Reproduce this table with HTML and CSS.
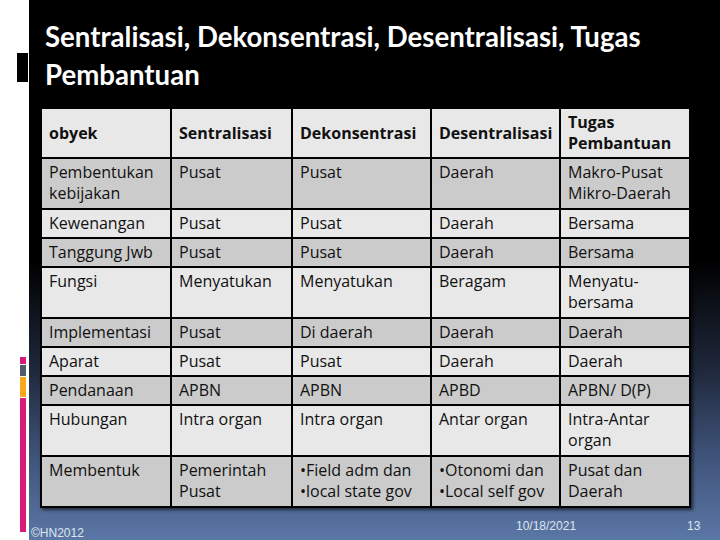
FILE: index.html
```html
<!DOCTYPE html>
<html>
<head>
<meta charset="utf-8">
<link rel="stylesheet" href="styles.css">
</head>
<body>
<div class="page">
  <div class="rail">
    <div class="mark"></div>
    <div class="bars">
      <div class="bar pink-s"></div>
      <div class="bar grey"></div>
      <div class="bar orange"></div>
      <div class="bar pink-l"></div>
    </div>
  </div>
  <div class="slide">
    <h1 class="title">Sentralisasi, Dekonsentrasi, Desentralisasi, Tugas Pembantuan</h1>
    <table class="grid">
      <colgroup>
        <col class="c1"><col class="c2"><col class="c3"><col class="c4"><col class="c5">
      </colgroup>
      <thead>
        <tr class="light head">
          <th>obyek</th><th>Sentralisasi</th><th>Dekonsentrasi</th><th>Desentralisasi</th><th>Tugas Pembantuan</th>
        </tr>
      </thead>
      <tbody>
        <tr class="dark tall"><td>Pembentukan kebijakan</td><td>Pusat</td><td>Pusat</td><td>Daerah</td><td>Makro-Pusat<br>Mikro-Daerah</td></tr>
        <tr class="light"><td>Kewenangan</td><td>Pusat</td><td>Pusat</td><td>Daerah</td><td>Bersama</td></tr>
        <tr class="dark"><td>Tanggung Jwb</td><td>Pusat</td><td>Pusat</td><td>Daerah</td><td>Bersama</td></tr>
        <tr class="light tall"><td>Fungsi</td><td>Menyatukan</td><td>Menyatukan</td><td>Beragam</td><td>Menyatu-<br>bersama</td></tr>
        <tr class="dark"><td>Implementasi</td><td>Pusat</td><td>Di daerah</td><td>Daerah</td><td>Daerah</td></tr>
        <tr class="light"><td>Aparat</td><td>Pusat</td><td>Pusat</td><td>Daerah</td><td>Daerah</td></tr>
        <tr class="dark"><td>Pendanaan</td><td>APBN</td><td>APBN</td><td>APBD</td><td>APBN/ D(P)</td></tr>
        <tr class="light tall"><td>Hubungan</td><td>Intra organ</td><td>Intra organ</td><td>Antar organ</td><td>Intra-Antar organ</td></tr>
        <tr class="dark tall"><td>Membentuk</td><td>Pemerintah Pusat</td><td>•Field adm dan<br>•local state gov</td><td>•Otonomi dan<br>•Local self gov</td><td>Pusat dan<br>Daerah</td></tr>
      </tbody>
    </table>
    <div class="footer">
      <span class="copy">©HN2012</span>
      <span class="date">10/18/2021</span>
      <span class="num">13</span>
    </div>
  </div>
</div>
</body>
</html>
```
FILE: styles.css
```css
html, body {
  margin: 0;
  padding: 0;
  background: #ffffff;
}
.page {
  display: flex;
  width: 720px;
  height: 540px;
  overflow: hidden;
}
.rail {
  width: 29px;
  flex: none;
  background: #ffffff;
  display: flex;
  flex-direction: column;
  align-items: flex-end;
}
.mark {
  width: 11px;
  height: 29px;
  background: #000;
  margin-top: 53px;
  margin-right: 1px;
}
.bars {
  margin-top: 275px;
  margin-right: 3px;
  width: 6px;
  display: flex;
  flex-direction: column;
}
.bar { width: 6px; }
.pink-s { height: 7px; background: #d81b7a; margin-bottom: 1px; }
.grey { height: 11px; background: #4f5a6a; margin-bottom: 1px; }
.orange { height: 20px; background: #f7a81b; margin-bottom: 1px; }
.pink-l { height: 134px; background: #d81b7a; }
.slide {
  flex: 1;
  height: 540px;
  background: linear-gradient(to bottom, #000 0%, #000 48%, #1e273a 68%, #3e5278 84%, #5b77a6 100%);
  display: flex;
  flex-direction: column;
}
.title {
  margin: 0;
  padding: 18px 20px 0 16px;
  font-family: Lato, "Open Sans", sans-serif;
  font-weight: 700;
  font-size: 27.6px;
  line-height: 38px;
  color: #ffffff;
  height: 89px;
  box-sizing: border-box;
  flex: none;
}
.grid {
  margin-left: 11px;
  margin-top: 18px;
  width: 649px;
  border-collapse: collapse;
  table-layout: fixed;
  font-family: "Open Sans", sans-serif;
  font-size: 16px;
  line-height: 21px;
  color: #111;
  border: 2px solid #000;
  box-shadow: 2px 2px 3px rgba(0,0,0,0.6);
  flex: none;
}
.c1 { width: 130px; }
.c2 { width: 121px; }
.c3 { width: 139px; }
.c4 { width: 129px; }
.c5 { width: 130px; }
.grid th, .grid td {
  border: 2px solid #000;
  padding: 3px 4px 2px 7px;
  text-align: left;
  vertical-align: top;
}
.grid tr { height: 29px; }
.grid tr.tall { height: 51px; }
.grid tr.head { height: 50px; }
.grid th {
  font-weight: 700;
  vertical-align: middle;
  padding-top: 1px;
  padding-bottom: 1px;
}
.light { background: #e8e8e8; }
.dark { background: #cbcbcb; }
.footer {
  flex: 1;
  position: relative;
  font-family: "Liberation Sans", Arial, sans-serif;
  font-size: 12px;
  color: #dfe5ef;
}
.copy { position: absolute; left: 2px; top: 18px; }
.date { position: absolute; left: 487px; top: 11px; }
.num { position: absolute; left: 658px; top: 11px; }
```
